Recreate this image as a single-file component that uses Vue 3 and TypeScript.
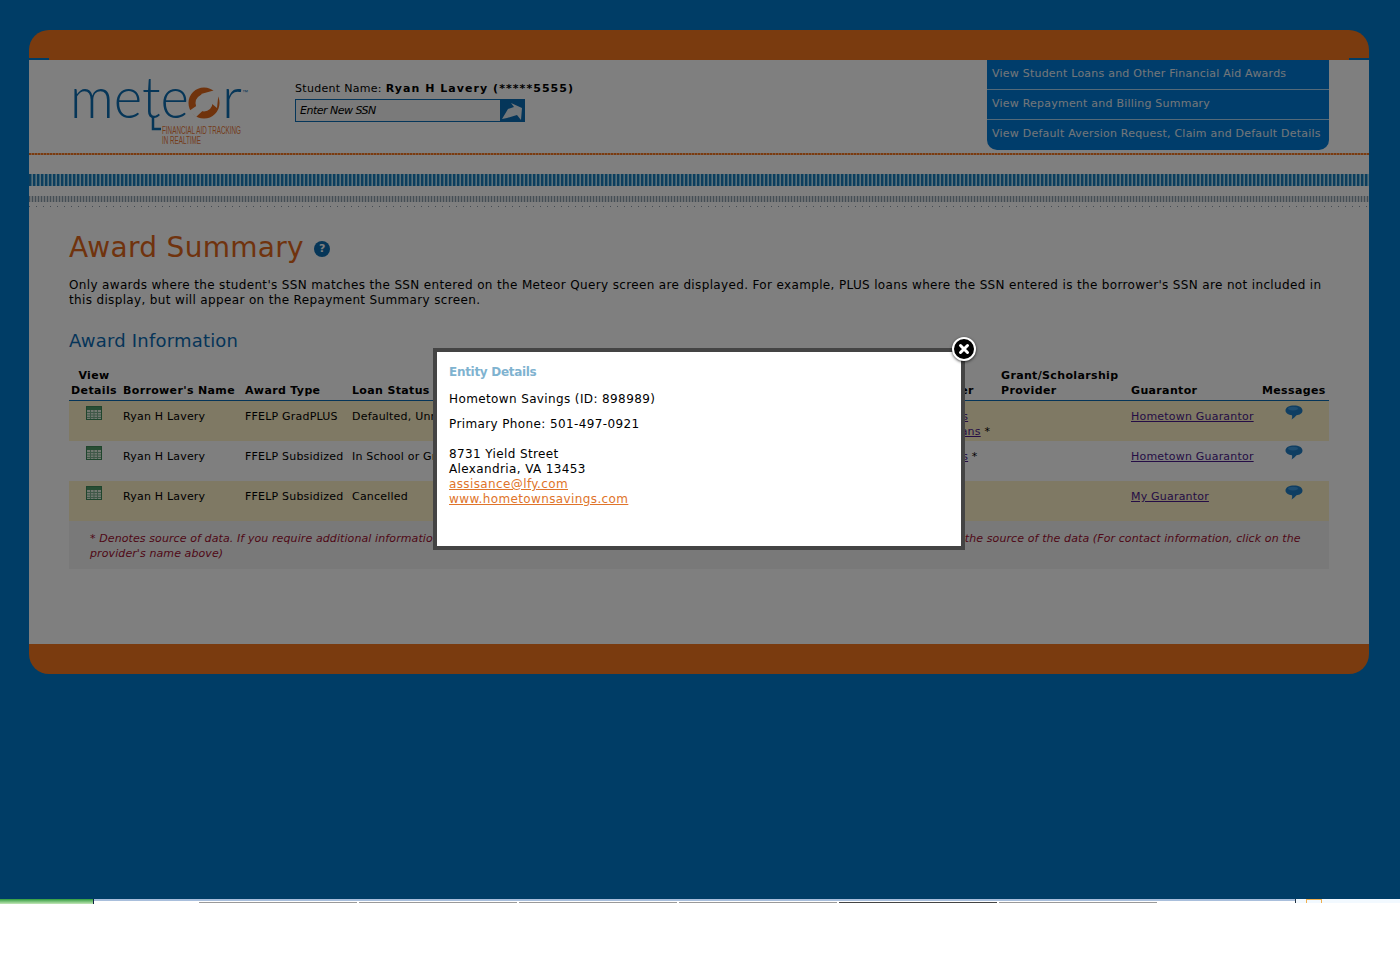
<template>
    <div class="screen">
        <div class="page">
            <div class="frame">
                <div class="bar bar-top"></div>
                <div class="content">
                    <header class="head">
                        <div class="logo">
                            <svg width="226" height="90" viewBox="-3 -15 226 90">
                                <text x="-2" y="43" class="logo-word" textLength="119" lengthAdjust="spacingAndGlyphs">mete</text>
                                <path d="M81 42V54H89" fill="none" stroke="#0d6cb0" stroke-width="2.500" />
                                <circle cx="132" cy="28" r="12" fill="none" stroke="#e0661b" stroke-width="7" />
                                <path d="M117 36L133 25L129 19L147 14L145 33L139 28L124 42Z" fill="#fff" />
                                <text x="150" y="43" class="logo-word" textLength="20" lengthAdjust="spacingAndGlyphs">r</text>
                                <text x="170" y="19" class="logo-tm">™</text>
                                <text x="90" y="59" class="logo-sub" textLength="79" lengthAdjust="spacingAndGlyphs">FINANCIAL AID TRACKING</text>
                                <text x="90" y="69" class="logo-sub" textLength="39" lengthAdjust="spacingAndGlyphs">IN REALTIME</text>
                            </svg>
                        </div>
                        <div class="student">
                            <div class="student-name">Student Name: <b>Ryan H Lavery (*****5555)</b></div>
                            <div class="ssn">
                                <span class="ssn-field">Enter New SSN</span>
                                <span class="ssn-go">
                                    <svg width="25" height="23" viewBox="0 0 25 23">
                                        <path d="M2 20 L8 10 L14 8 L11 4 L22 9 L21 21 L17 16 L7 19 Z" fill="#e6eef4" />
                                    </svg>
                                </span>
                            </div>
                        </div>
                        <nav class="nav">
                            <a v-for="item in navItems" :key="item">{{ item }}</a>
                        </nav>
                    </header>
                    <div class="rule-orange"></div>
                    <div class="rule-blue"></div>
                    <div class="rule-gray"></div>
                    <div class="rule-dots"></div>

                    <main class="main">
                        <h1>Award Summary <span class="help">?</span></h1>
                        <p class="intro">Only awards where the student's SSN matches the SSN entered on the Meteor Query screen are displayed. For example, PLUS loans where the SSN entered is the borrower's SSN are not included in this display, but will appear on the Repayment Summary screen.</p>
                        <h2>Award Information</h2>
                        <table class="awards">
                            <colgroup>
                                <col v-for="w in colWidths" :key="w.id" :style="{ width: w.width + 'px' }" />
                            </colgroup>
                            <thead>
                                <tr>
                                    <th class="center">View<br />Details</th>
                                    <th>Borrower's Name</th>
                                    <th>Award Type</th>
                                    <th>Loan Status</th>
                                    <th class="lender-head">Lender / Servicer</th>
                                    <th>Grant/Scholarship<br />Provider</th>
                                    <th>Guarantor</th>
                                    <th class="center">Messages</th>
                                </tr>
                            </thead>
                            <tbody>
                                <tr v-for="(row, i) in rows" :key="i" :class="{ odd: i % 2 === 0 }">
                                    <td class="center icon-cell">
                                        <svg width="16" height="14" viewBox="0 0 16 14">
                                            <rect x="0.500" y="0.500" width="15" height="13" fill="#e4f0e0" stroke="#3f8a5a" />
                                            <rect x="1" y="1" width="14" height="3" fill="#4f9a68" />
                                            <path d="M1 6.500H15M1 9H15M1 11.500H15M4.500 4V13M8 4V13M11.500 4V13" stroke="#7db08f" stroke-width="1" />
                                        </svg>
                                    </td>
                                    <td>{{ row.borrower }}</td>
                                    <td>{{ row.type }}</td>
                                    <td>{{ row.status }}</td>
                                    <td class="lender">
                                        <div v-for="l in row.lenders" :key="l.name"><a class="link">{{ l.name }}</a>{{ l.source ? ' *' : '' }}</div>
                                    </td>
                                    <td></td>
                                    <td><a class="link">{{ row.guarantor }}</a></td>
                                    <td class="center icon-cell bubble-cell">
                                        <svg width="18" height="15" viewBox="0 0 18 15">
                                            <path d="M9 0.500C13.800 0.500 17.500 2.400 17.500 5.500C17.500 8.400 14.600 10 11.500 10.300C10.400 11.600 8.500 13.600 6.600 14.400C7.200 13 7.300 11.400 7 10.200C3.400 9.800 0.500 8.200 0.500 5.500C0.500 2.400 4.200 0.500 9 0.500Z" fill="#1f7cc4" />
                                            <ellipse cx="8" cy="3.600" rx="5" ry="1.800" fill="#3e9ae0" />
                                        </svg>
                                    </td>
                                </tr>
                            </tbody>
                        </table>
                        <div class="note">* Denotes source of data. If you require additional information about this award or its repayment or servicing, please contact the organization identified as the source of the data (For contact information, click on the provider's name above)</div>
                    </main>
                </div>
                <div class="bar bar-bottom"></div>
            </div>
            <div class="overlay"></div>
            <div class="modal">
                <button class="close" aria-label="Close">
                    <svg width="14" height="14" viewBox="0 0 14 14">
                        <path d="M3.500 3.500L10.500 10.500M10.500 3.500L3.500 10.500" stroke="#fff" stroke-width="3" stroke-linecap="round" />
                    </svg>
                </button>
                <div class="modal-title">Entity Details</div>
                <div class="modal-line">{{ entity.name }} (ID: {{ entity.id }})</div>
                <div class="modal-line">Primary Phone: {{ entity.phone }}</div>
                <div class="modal-address">
                    <div>{{ entity.street }}</div>
                    <div>{{ entity.city }}</div>
                    <div><a class="modal-link">{{ entity.email }}</a></div>
                    <div><a class="modal-link">{{ entity.web }}</a></div>
                </div>
            </div>
        </div>
        <div class="taskbar">
            <span class="task-start"></span>
            <span class="task-row">
                <i v-for="t in tabs" :key="t.left" :class="t.cls" :style="{ width: t.width + 'px' }"></i>
            </span>
            <span class="task-tray"><i class="tray-icon"></i></span>
        </div>
    </div>
</template>

<script setup lang="ts">
interface Lender {
    name: string;
    source: boolean;
}

interface AwardRow {
    borrower: string;
    type: string;
    status: string;
    lenders: Lender[];
    guarantor: string;
}

const navItems = [
    'View Student Loans and Other Financial Aid Awards',
    'View Repayment and Billing Summary',
    'View Default Aversion Request, Claim and Default Details',
];

const colWidths = [
    { id: 'view', width: 54 },
    { id: 'borrower', width: 122 },
    { id: 'type', width: 107 },
    { id: 'status', width: 507 },
    { id: 'lender', width: 142 },
    { id: 'grant', width: 130 },
    { id: 'guarantor', width: 131 },
    { id: 'messages', width: 67 },
];

const rows: AwardRow[] = [
    {
        borrower: 'Ryan H Lavery',
        type: 'FFELP GradPLUS',
        status: 'Defaulted, Unresolved',
        lenders: [
            { name: 'Hometown Savings', source: false },
            { name: 'Hometown Fed Loans', source: true },
        ],
        guarantor: 'Hometown Guarantor',
    },
    {
        borrower: 'Ryan H Lavery',
        type: 'FFELP Subsidized',
        status: 'In School or Grace',
        lenders: [{ name: 'Hometown Savings', source: true }],
        guarantor: 'Hometown Guarantor',
    },
    {
        borrower: 'Ryan H Lavery',
        type: 'FFELP Subsidized',
        status: 'Cancelled',
        lenders: [],
        guarantor: 'My Guarantor',
    },
];

const entity = {
    name: 'Hometown Savings',
    id: '898989',
    phone: '501-497-0921',
    street: '8731 Yield Street',
    city: 'Alexandria, VA 13453',
    email: 'assisance@lfy.com',
    web: 'www.hometownsavings.com',
};

const tabs = [
    { left: 93, width: 103, cls: 'tab-none' },
    { left: 198, width: 158, cls: 'tab' },
    { left: 358, width: 158, cls: 'tab' },
    { left: 518, width: 158, cls: 'tab' },
    { left: 678, width: 158, cls: 'tab' },
    { left: 838, width: 158, cls: 'tab tab-active' },
    { left: 998, width: 158, cls: 'tab' },
    { left: 1158, width: 135, cls: 'tab-none' },
];
</script>

<style>
body {
    background: #fff;
}
</style>

<style scoped>
.screen {
    width: 1400px;
    height: 964px;
    overflow: hidden;
    font-family: "DejaVu Sans", Verdana, sans-serif;
    font-size: 11px;
    color: #000;
}

.page {
    position: relative;
    height: 899px;
    padding: 30px 30px 0 29px;
    box-sizing: border-box;
    background: #007acc;
}

.frame {
    width: 1340px;
}

.bar {
    height: 30px;
    background-color: #f4761e;
}

.bar-top {
    border-radius: 20px 20px 0 0;
    background-image: linear-gradient(#007acc, #007acc), linear-gradient(#007acc, #007acc);
    background-size: 20px 2px;
    background-position: left bottom, right bottom;
    background-repeat: no-repeat;
}

.bar-bottom {
    border-radius: 0 0 20px 20px;
}

.content {
    background: #fff;
    height: 584px;
    overflow: hidden;
}

.head {
    display: flex;
    height: 93px;
    padding: 0 40px 0 43px;
}

.logo {
    width: 223px;
}

.logo svg {
    display: block;
    margin-left: -3px;
}

.logo-word {
    font-family: Lato, sans-serif;
    font-weight: 300;
    font-size: 58px;
    fill: #0d6cb0;
}

.logo-tm {
    font-family: "Liberation Sans", sans-serif;
    font-size: 6px;
    fill: #0d6cb0;
}

.logo-sub {
    font-family: "Liberation Sans", sans-serif;
    font-size: 10.500px;
    fill: #e87a3a;
}

.student {
    padding-top: 22px;
}

.student-name {
    font-size: 11px;
    line-height: 14px;
    letter-spacing: 0.3px;
}

.student-name b {
    letter-spacing: 1.05px;
}

.ssn {
    display: flex;
    margin-top: 3px;
    width: 230px;
    height: 23px;
}

.ssn-field {
    flex: 1;
    box-sizing: border-box;
    border: 1px solid #0a6cb4;
    border-right: none;
    background: #f4f4f4;
    font-style: italic;
    font-size: 11px;
    line-height: 22px;
    letter-spacing: -0.5px;
    padding-left: 4px;
}

.ssn-go {
    width: 25px;
    height: 23px;
    background: #0a6cb4;
}

.ssn-go svg {
    display: block;
}

.nav {
    margin-left: auto;
    width: 342px;
    height: 90px;
    background: #007ad6;
    border-radius: 0 0 10px 10px;
}

.nav a {
    display: block;
    box-sizing: border-box;
    height: 30px;
    padding: 7px 0 0 5px;
    font-size: 11px;
    line-height: 14px;
    letter-spacing: 0.22px;
    color: #e4edf4;
    border-bottom: 1px solid #a9d4f2;
}

.nav a:last-child {
    border-bottom: none;
}

.rule-orange {
    height: 2px;
    background: repeating-linear-gradient(90deg, #f4761e 0 2px, #f9b58a 2px 3px);
}

.rule-blue {
    margin-top: 19px;
    height: 12px;
    background: repeating-linear-gradient(90deg, #1a7ab8 0 2px, #6cc0e8 2px 3px, #b8dcec 3px 4px);
}

.rule-gray {
    margin-top: 10px;
    height: 6px;
    background: repeating-linear-gradient(90deg, #8a9cab 0 1px, #dde2e6 1px 3px);
}

.rule-dots {
    margin-top: 4px;
    height: 1px;
    background: repeating-linear-gradient(90deg, #8a99a6 0 1px, #fff 1px 7px);
}

.main {
    padding: 23px 40px 0;
}

h1 {
    margin: 0;
    height: 36px;
    font-size: 28px;
    font-weight: 400;
    line-height: 36px;
    color: #e0661b;
    letter-spacing: 0.3px;
}

.help {
    display: inline-block;
    vertical-align: 5px;
    width: 16px;
    height: 16px;
    margin-left: 1px;
    border-radius: 50%;
    background: #0d6cb0;
    color: #fff;
    font-size: 11px;
    font-weight: 700;
    line-height: 16px;
    text-align: center;
    letter-spacing: 0;
}

.intro {
    margin: 12px 0 0;
    font-size: 12px;
    line-height: 15px;
    letter-spacing: 0.35px;
}

h2 {
    margin: 22px 0 0;
    font-size: 18px;
    font-weight: 400;
    line-height: 22px;
    letter-spacing: 0.2px;
    color: #0b6bb2;
}

.awards {
    width: 1260px;
    margin-top: 14px;
    table-layout: fixed;
    border-collapse: separate;
    border-spacing: 0;
}

.awards th {
    padding: 0 0 2px;
    height: 35px;
    box-sizing: border-box;
    vertical-align: bottom;
    text-align: left;
    font-size: 11px;
    line-height: 15px;
    letter-spacing: 0.35px;
    white-space: nowrap;
    border-bottom: 1px solid #0b6bb2;
}

.awards .lender-head {
    padding-left: 3px;
}

.awards td {
    padding: 8px 0 0;
    height: 40px;
    box-sizing: border-box;
    vertical-align: top;
    font-size: 11px;
    line-height: 15px;
    letter-spacing: 0.2px;
}

.awards .center {
    text-align: center;
    padding-right: 4px;
}

.awards .icon-cell {
    padding-top: 5px;
}

.awards .bubble-cell {
    padding-top: 4px;
}

.awards .lender {
    white-space: nowrap;
}

.awards .odd td {
    background: #fef2c8;
}

.link {
    color: #4b1a8c;
    text-decoration: underline;
}

.note {
    box-sizing: border-box;
    height: 48px;
    padding: 10px 24px 0 21px;
    background: #f2f2f2;
    color: #a01030;
    font-style: italic;
    font-size: 11px;
    line-height: 15px;
    letter-spacing: 0.1px;
}

.overlay {
    position: absolute;
    inset: 0;
    background: rgba(0, 0, 0, 0.5);
}

.modal {
    position: absolute;
    left: 433px;
    top: 348px;
    width: 532px;
    height: 202px;
    box-sizing: border-box;
    border: 4px solid #444;
    background: #fff;
    padding: 13px 12px 0;
    font-size: 12px;
    line-height: 15px;
    letter-spacing: 0.38px;
}

.close {
    position: absolute;
    right: -15px;
    top: -15px;
    width: 24px;
    height: 24px;
    padding: 0;
    display: flex;
    align-items: center;
    justify-content: center;
    border: 2px solid #fff;
    border-radius: 50%;
    background: #000;
    box-shadow: 0 1px 3px rgba(0, 0, 0, 0.7);
}

.modal-title {
    font-weight: 700;
    letter-spacing: -0.3px;
    color: #7fb3d0;
}

.modal-line {
    margin-top: 12px;
}

.modal-line + .modal-line {
    margin-top: 10px;
}

.modal-address {
    margin-top: 15px;
}

.modal-link {
    color: #e0742a;
    text-decoration: underline;
}

.taskbar {
    position: relative;
    display: flex;
    height: 65px;
    background: #fff;
}

.task-start {
    width: 93px;
    height: 5px;
    background: linear-gradient(#2e9a3c, #c4e8b8);
    border-right: 1px solid #124;
}

.task-row {
    display: flex;
    gap: 2px;
    width: 1202px;
    height: 4px;
    box-sizing: border-box;
    background: linear-gradient(#a9bfdc 0 2px, #fff 2px);
    border-right: 1px solid #234;
}

.task-row i {
    display: block;
    height: 4px;
}

.tab {
    border-bottom: 1px solid #999;
    box-sizing: border-box;
}

.tab-active {
    border-bottom-color: #444;
}

.task-tray {
    flex: 1;
    height: 4px;
    background: #f2f9ff;
    padding-left: 10px;
}

.tray-icon {
    display: block;
    width: 14px;
    height: 3px;
    border: 1px solid #f0b050;
    border-bottom: none;
}
</style>
